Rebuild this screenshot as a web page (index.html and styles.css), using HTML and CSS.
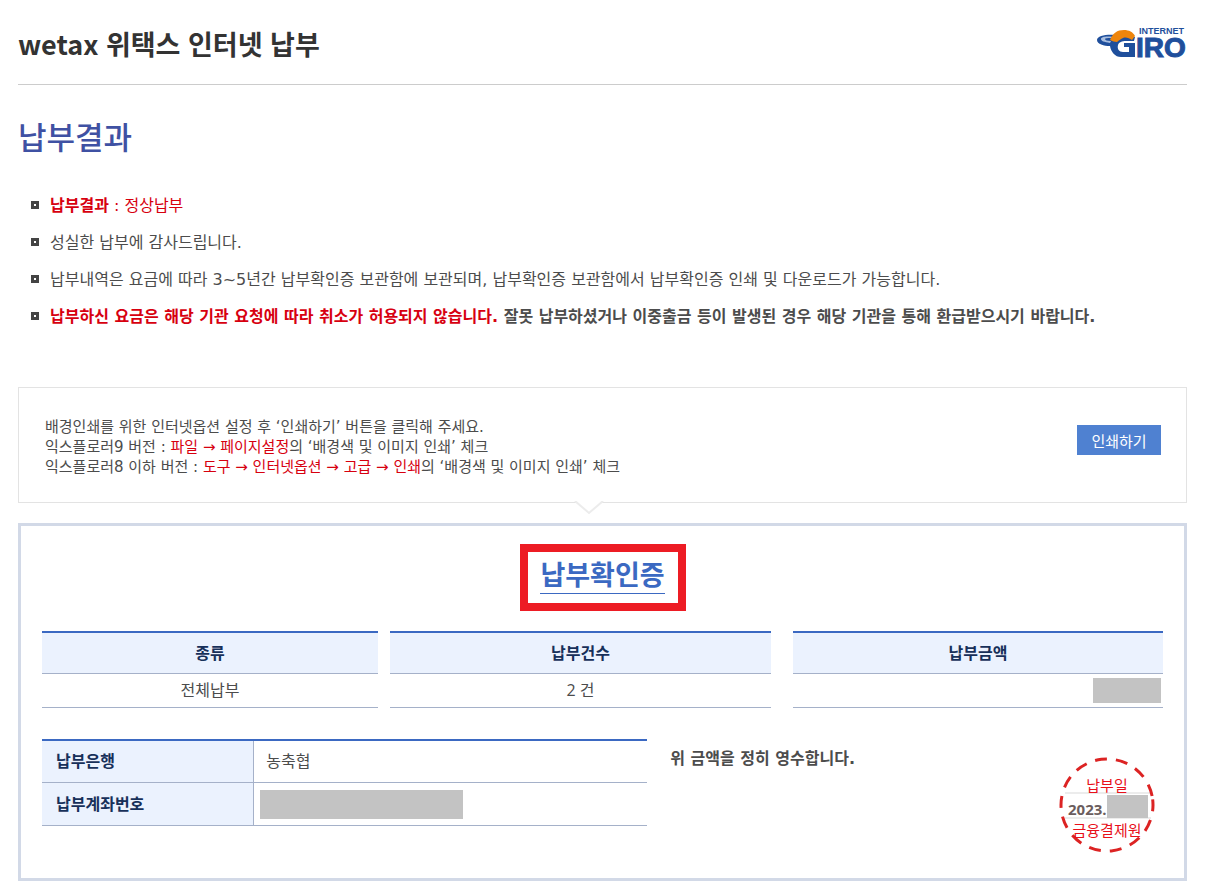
FILE: index.html
```html
<!DOCTYPE html>
<html lang="ko">
  <head>
    <meta charset="utf-8">
    <title>wetax 위택스 인터넷 납부</title>
    <link rel="stylesheet" href="styles.css">
  </head>
  <body>
    <header class="top">
      <h1>wetax 위택스 인터넷 납부</h1>
      <svg class="logo" width="91" height="43" viewBox="0 -5 91 43" role="img" aria-label="INTERNET GIRO">
        <path d="M21 9C12 8 1 9 1 14c0 4 7 6 13 6 1 6 5 11 11 11h14V17H28v4h5v5h-6c-4 0-6-3-5-7 1-3 4-4 8-4h8l1-4z" fill="#1f4f9c"/>
        <path d="M17 11C10 10 5 11 5 13c0 2 3 3 9 4l1-2c-4 0-6-1-6-2s3-1 7-1z" fill="#a9bedf"/>
        <path d="M14 14C17 7 21 4 28 4c5 0 9 2 11 6l-3 4c-3-2-6-3-9-2-2 1-4 2-6 4-2 0-5-1-7-2z" fill="#ee850c"/>
        <text class="logo-text"><tspan x="43" y="8" class="logo-small">INTERNET</tspan><tspan x="40" y="31" class="logo-big">IRO</tspan></text>
      </svg>
    </header>

    <h2>납부결과</h2>

    <ul class="notes">
      <li class="red"><b>납부결과</b> : 정상납부</li>
      <li>성실한 납부에 감사드립니다.</li>
      <li>납부내역은 요금에 따라 3~5년간 납부확인증 보관함에 보관되며, 납부확인증 보관함에서 납부확인증 인쇄 및 다운로드가 가능합니다.</li>
      <li><b><span class="red">납부하신 요금은 해당 기관 요청에 따라 취소가 허용되지 않습니다.</span> 잘못 납부하셨거나 이중출금 등이 발생된 경우 해당 기관을 통해 환급받으시기 바랍니다.</b></li>
    </ul>

    <div class="print-box">
      <p>
        배경인쇄를 위한 인터넷옵션 설정 후 ‘인쇄하기’ 버튼을 클릭해 주세요.<br>
        익스플로러9 버전 : <span class="red">파일 → 페이지설정</span>의 ‘배경색 및 이미지 인쇄’ 체크<br>
        익스플로러8 이하 버전 : <span class="red">도구 → 인터넷옵션 → 고급 → 인쇄</span>의 ‘배경색 및 이미지 인쇄’ 체크
      </p>
      <button type="button" onclick="window.print()">인쇄하기</button>
      <svg class="arrow" width="30" height="14" viewBox="0 0 30 14">
        <path d="M1 0h28L15 13z" fill="#fff"/>
        <path d="M1 0l14 12L29 0" fill="none" stroke="#ececec" stroke-width="2"/>
      </svg>
    </div>

    <main class="receipt">
      <h3><span>납부확인증</span></h3>

      <div class="summary">
        <table class="kind">
          <tr><th scope="col">종류</th></tr>
          <tr><td>전체납부</td></tr>
        </table>
        <table class="count">
          <tr><th scope="col">납부건수</th></tr>
          <tr><td>2 건</td></tr>
        </table>
        <table class="amount">
          <tr><th scope="col">납부금액</th></tr>
          <tr><td><span class="mask"></span></td></tr>
        </table>
      </div>

      <div class="detail">
        <table class="bank">
          <tr><th scope="row">납부은행</th><td>농축협</td></tr>
          <tr><th scope="row">납부계좌번호</th><td class="account"><span class="mask"></span></td></tr>
        </table>
        <p>위 금액을 정히 영수합니다.</p>
        <svg class="seal" width="98" height="98" viewBox="0 0 98 98">
          <path d="M6 37h88M6 62h86" stroke="#d9d9d9"/>
          <circle cx="48" cy="49" r="46" fill="none" stroke="#dc2323" stroke-width="3" stroke-dasharray="12 9" transform="rotate(-7 48 49)"/>
          <text x="48" y="35" class="seal-red">납부일</text>
          <text x="9" y="59" class="seal-date">2023.</text>
          <rect x="48" y="39" width="41" height="23" fill="#c3c3c3"/>
          <text x="48" y="80" class="seal-red">금융결제원</text>
        </svg>
      </div>
    </main>
  </body>
</html>
```

FILE: styles.css
```css
* {
  box-sizing: border-box;
}

body {
  margin: 0 18px 9px;
  background: #fff;
  color: #4c4c4c;
  font-family: "Open Sans", "Noto Sans CJK KR", sans-serif;
  font-size: 16px;
  line-height: 20px;
}

h1, h2, h3, p, ul {
  margin: 0;
  padding: 0;
}

.red {
  color: #d7000f;
}

.top {
  display: flex;
  justify-content: space-between;
  align-items: center;
  height: 85px;
  border-bottom: 1px solid #ccc;
}

h1 {
  color: #333;
  font-family: "Noto Sans CJK KR", sans-serif;
  font-size: 27px;
  line-height: 32px;
  padding-top: 4px;
}

.logo-text {
  fill: #1f4f9c;
  font-family: "Liberation Sans", sans-serif;
  font-weight: bold;
}

.logo-small {
  font-size: 9px;
}

.logo-big {
  font-size: 28px;
  stroke: #1f4f9c;
  stroke-width: 1px;
}

h2 {
  margin-top: 32px;
  color: #3f51a3;
  font-size: 31px;
  font-weight: 500;
  line-height: 40px;
}

.notes {
  margin-top: 31px;
  padding-left: 13px;
  list-style: none;
}

.notes, .print-box p, .detail p {
  font-family: "DejaVu Sans", "Noto Sans CJK KR", sans-serif;
}

.notes li {
  display: flow-root;
  padding: 8px 0 8px 19px;
  line-height: 20px;
  margin-bottom: 1px;
}

.notes li::before {
  content: "";
  box-sizing: border-box;
  float: left;
  width: 8px;
  height: 8px;
  margin: 5px 0 0 -19px;
  border: 3px solid #444;
}

.print-box {
  position: relative;
  display: flex;
  justify-content: space-between;
  align-items: center;
  margin-top: 52px;
  padding: 29px 25px 25px 26px;
  border: 1px solid #e3e3e3;
  font-size: 15px;
}

.print-box button {
  width: 84px;
  height: 30px;
  margin-bottom: 14px;
  padding: 0;
  border: 0;
  background: #4f81d1;
  color: #fff;
  font-family: inherit;
  font-size: 15px;
}

.arrow {
  position: absolute;
  left: 555px;
  bottom: -13px;
}

.receipt {
  margin-top: 20px;
  padding: 18px 21px 24px;
  border: 3px solid #d2d9e7;
}

h3 {
  width: 166px;
  height: 67px;
  margin: 0 auto 20px;
  padding-top: 5px;
  border: 8px solid #ed1c24;
  color: #3b69c2;
  font-size: 27px;
  line-height: 36px;
  text-align: center;
}

h3 span {
  display: inline-block;
  border-bottom: 1px solid #3b69c2;
}

table {
  border-collapse: collapse;
  border-top: 2px solid #3b69c2;
}

th, td {
  border-bottom: 1px solid #a5b1c9;
}

th {
  background: #ebf2fe;
  color: #17305a;
}

.summary {
  display: flex;
  gap: 12px;
}

.summary table {
  table-layout: fixed;
  width: 0;
}

.summary th {
  height: 41px;
  padding: 0;
}

.summary td {
  height: 34px;
  padding: 0 2px;
  text-align: center;
}

.summary .kind {
  flex: 336;
}

.summary .count {
  flex: 381;
}

.summary .amount {
  flex: 370;
  margin-left: 10px;
}

.mask {
  display: block;
  background: #c3c3c3;
}

.amount .mask {
  width: 68px;
  height: 25px;
  margin-left: auto;
}

.detail {
  display: flex;
  align-items: flex-start;
  margin-top: 31px;
}

.bank {
  width: 54%;
}

.bank th, .bank td {
  height: 43px;
  padding: 0 12px;
  text-align: left;
}

.bank th {
  width: 35%;
  padding-left: 14px;
  border-right: 1px solid #a5b1c9;
}

.bank .account {
  padding-left: 6px;
}

.account .mask {
  width: 203px;
  height: 29px;
}

.detail p {
  flex: 1;
  padding: 10px 0 0 23px;
  font-weight: bold;
}

.seal {
  margin: 17px 6px 0 0;
}

.seal-red {
  fill: #e8101a;
  font-size: 15px;
  text-anchor: middle;
}

.seal-date {
  fill: #6b5d5d;
  font-size: 15px;
  font-weight: bold;
}
```
